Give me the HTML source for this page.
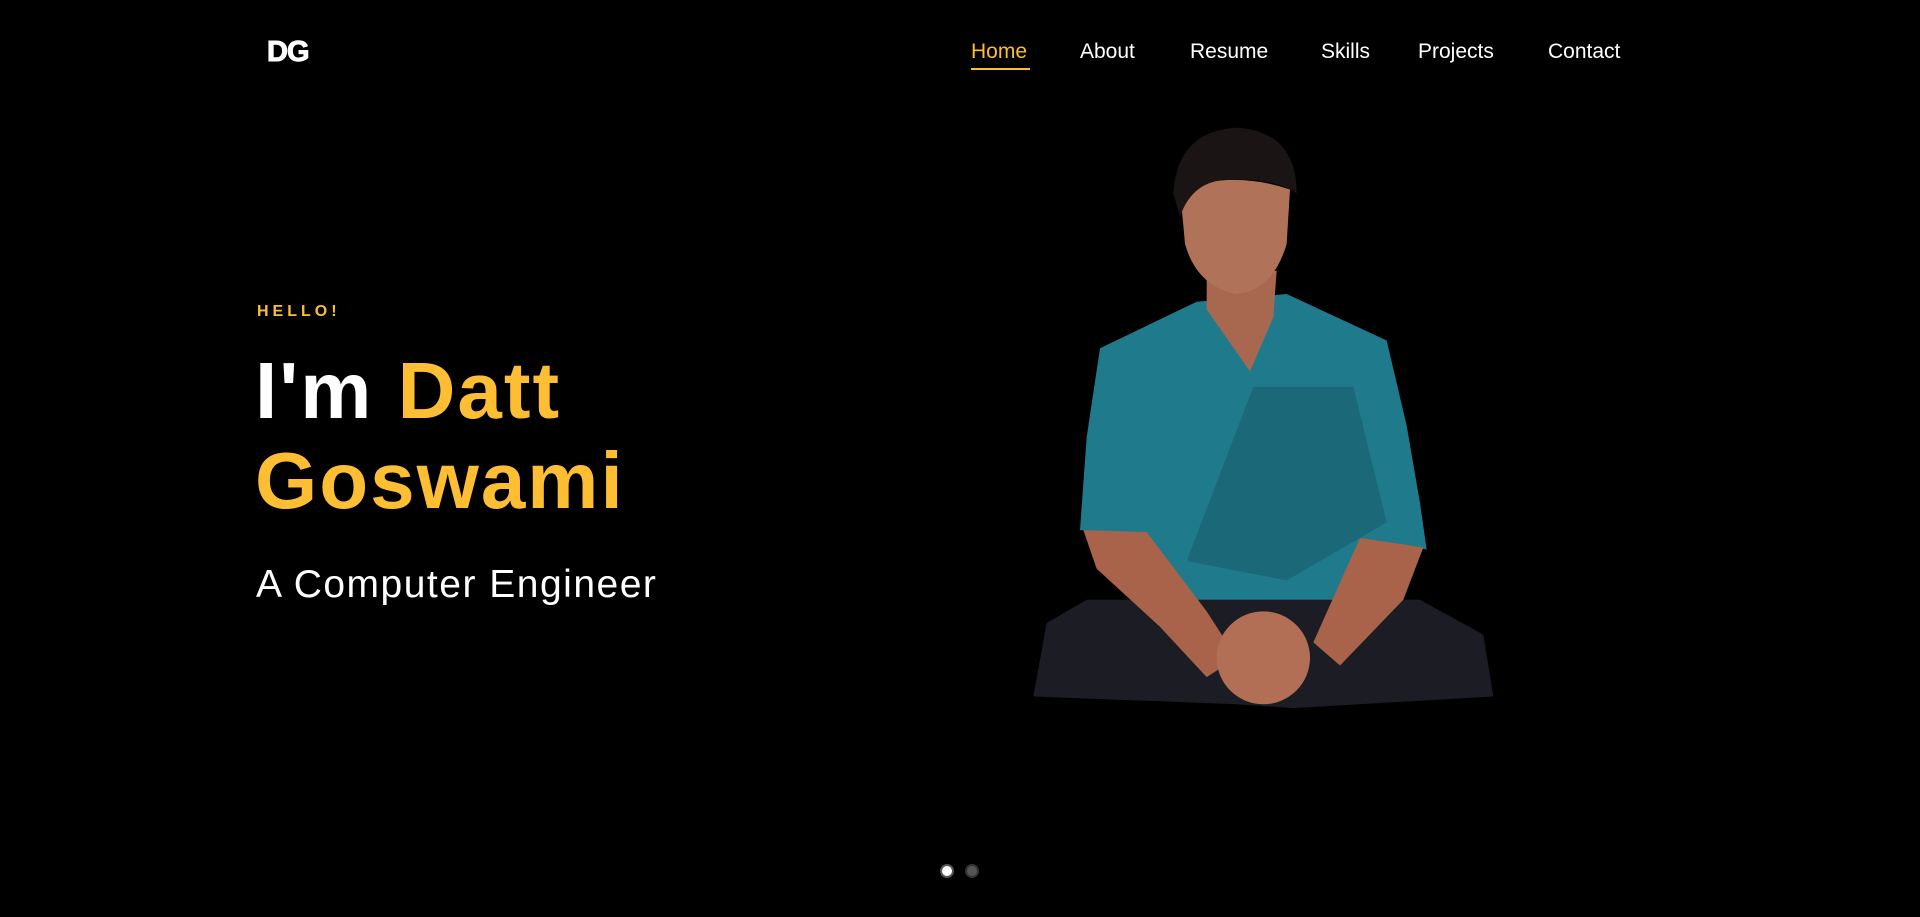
<!DOCTYPE html>
<html><head><meta charset="utf-8"><style>
*{margin:0;padding:0;box-sizing:border-box}
html,body{width:1920px;height:917px;background:#000;overflow:hidden;font-family:"Liberation Sans",sans-serif;color:#fff}
.logo{position:absolute;left:267px;top:36px;font-size:29px;font-weight:900;letter-spacing:-1px;-webkit-text-stroke:1px #fff}
.nav a{position:absolute;top:40px;font-size:21px;color:#fff;text-decoration:none}
.nav a.act{color:#fdbe34}
.ul{position:absolute;left:971px;top:68px;width:59px;height:2px;background:#fdbe34}
.hello{position:absolute;left:257px;top:303px;font-size:16px;font-weight:bold;letter-spacing:4px;color:#fdbe34}
.h1{position:absolute;left:255px;top:346px;font-size:80px;font-weight:bold;line-height:90px;letter-spacing:2px}
.h1 span{color:#fdbe34}
.sub{position:absolute;left:256px;top:563px;font-size:39px;letter-spacing:1.5px}
.dot{position:absolute;top:864px;width:14px;height:14px;border-radius:50%}
</style></head><body>
<div class="logo">DG</div>
<div class="nav">
<a class="act" style="left:971px">Home</a>
<a style="left:1080px">About</a>
<a style="left:1190px">Resume</a>
<a style="left:1321px">Skills</a>
<a style="left:1418px">Projects</a>
<a style="left:1548px">Contact</a>
</div>
<div class="ul"></div>
<div class="hello">HELLO!</div>
<div class="h1">I'm <span>Datt<br>Goswami</span></div>
<div class="sub">A Computer Engineer</div>
<svg style="position:absolute;left:1020px;top:116px" width="490" height="685" viewBox="0 0 1470 1770" preserveAspectRatio="none">
<path d="M40 1500 L80 1310 L200 1250 L1200 1250 L1390 1340 L1420 1500 L820 1530 L650 1520 Z" fill="#1b1c24"/>
<path d="M240 600 L530 480 L800 460 L1100 580 L1160 800 L1200 1000 L1220 1120 L1020 1090 L1000 1250 L360 1250 L380 1080 L180 1070 L200 830 Z" fill="#1f7a8c"/>
<path d="M700 700 L1000 700 L1100 1050 L800 1200 L500 1150 Z" fill="#1a6878"/>
<path d="M560 400 L770 400 L760 520 L690 660 L560 500 Z" fill="#a8684f"/>
<path d="M190 1070 L380 1075 L560 1280 L650 1400 L560 1450 L420 1320 L230 1170 Z" fill="#a8634a"/>
<path d="M1020 1090 L1210 1115 L1150 1250 L960 1420 L880 1360 Z" fill="#a8634a"/>
<ellipse cx="730" cy="1400" rx="140" ry="120" fill="#b36f55"/>
<path d="M480 190 Q640 140 810 190 L800 330 Q760 450 650 460 Q530 440 495 330 Z" fill="#b0735a"/>
<path d="M460 200 Q470 40 650 30 Q830 40 830 200 Q760 160 640 165 Q520 160 480 260 Z" fill="#1a1414"/>
</svg>
<div class="dot" style="left:940px;background:#fff;border:2px solid #555"></div>
<div class="dot" style="left:965px;background:#555;border:2px solid #333"></div>
</body></html>
